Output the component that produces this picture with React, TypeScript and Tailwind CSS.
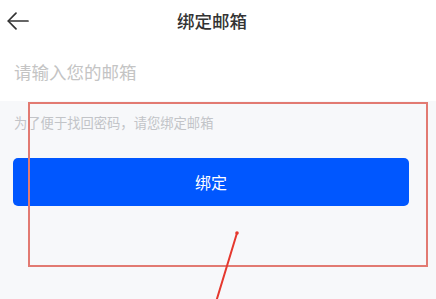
import React from "react";

const font = { fontFamily: '"Noto Sans CJK SC", "Noto Sans", sans-serif' };

export default function App() {
  return (
    <div className="relative w-[436px] h-[299px] overflow-hidden bg-[#f7f8fa]" style={font}>
      {/* Header */}
      <div className="relative h-[44px] bg-white flex items-center justify-center">
        <button className="absolute left-[6px] top-[10px] w-[24px] h-[24px] flex items-center justify-center">
          <svg width="24" height="24" viewBox="0 0 24 24" fill="none" stroke="#333" strokeWidth="1.7" strokeLinecap="round" strokeLinejoin="round">
            <path d="M22 11H2.5" />
            <path d="M10 3.2L2.2 11l7.8 7.8" />
          </svg>
        </button>
        <h1 className="text-[17.5px] font-medium text-[#333] leading-none mt-[-2px] mr-[12px]">绑定邮箱</h1>
      </div>

      {/* Email input */}
      <div className="h-[57px] bg-white flex items-center px-[14px]">
        <input
          className="w-full bg-transparent outline-none text-[17.5px] text-[#333] placeholder:text-[#c4c4c4] mt-[-1px]"
          placeholder="请输入您的邮箱"
        />
      </div>

      {/* Hint */}
      <p className="px-[14px] pt-[13px] text-[13.3px] leading-[18px] text-[#c2c4c8]">为了便于找回密码，请您绑定邮箱</p>

      {/* Submit */}
      <div className="px-[13px] pt-[26px]">
        <button className="w-[396px] h-[48px] rounded-[5px] bg-[#0057ff] text-white text-[16px] flex items-center justify-center">
          绑定
        </button>
      </div>

      {/* Annotation overlay */}
      <div className="absolute left-[28px] top-[102px] w-[400px] h-[165px] border-2 border-[#e27a72] pointer-events-none" />
      <svg className="absolute left-0 top-0 pointer-events-none" width="436" height="299">
        <line x1="237" y1="233" x2="216" y2="302" stroke="#e5382e" strokeWidth="2" strokeLinecap="round" />
        <circle cx="237" cy="233" r="1.8" fill="#e5382e" />
      </svg>
    </div>
  );
}
